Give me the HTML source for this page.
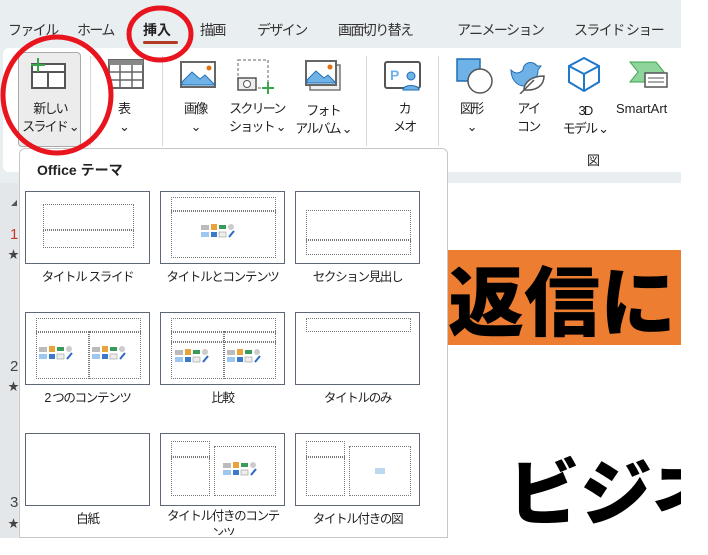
<!DOCTYPE html>
<html><head><meta charset="utf-8"><style>
*{margin:0;padding:0;box-sizing:border-box}
body{width:708px;height:555px;overflow:hidden;background:#fff;font-family:"Liberation Sans","Noto Sans CJK JP",sans-serif;color:#222;position:relative}
.a{position:absolute}
.tab{position:absolute;top:20px;font-size:14px;letter-spacing:-1.6px;color:#333;white-space:nowrap}
.lbl{position:absolute;font-size:13px;letter-spacing:-1.8px;color:#222;text-align:center;line-height:18px;white-space:nowrap}
.sep{position:absolute;top:56px;width:1px;height:90px;background:#d8d8d8}
.th{position:absolute;width:125px;height:73px;border:1.5px solid #5f6678;background:#fff}
.d{position:absolute;border:1px dotted #777}
.tl{position:absolute;width:125px;text-align:center;font-size:12.5px;letter-spacing:-1.3px;color:#222;white-space:nowrap}
.ic{position:absolute;width:44px;height:15px}
</style></head><body>
<div class="a" style="left:0;top:0;width:681px;height:555px;background:#e9eef1"></div>
<div class="a" style="left:681px;top:0;width:27px;height:555px;background:#fff"></div>
<div class="tab" style="left:8px">ファイル</div>
<div class="tab" style="left:77px">ホーム</div>
<div class="tab" style="left:143px;font-weight:bold;color:#222;letter-spacing:0">挿入</div>
<div class="a" style="left:143px;top:41px;width:35px;height:3px;background:#b33a22;border-radius:2px"></div>
<div class="tab" style="left:200px">描画</div>
<div class="tab" style="left:257px">デザイン</div>
<div class="tab" style="left:338px">画面切り替え</div>
<div class="tab" style="left:457px">アニメーション</div>
<div class="tab" style="left:574px">スライド ショー</div>
<!-- ribbon -->
<div class="a" style="left:3px;top:48px;width:678px;height:124px;background:#fff;border-radius:6px 0 0 6px"></div>
<div class="a" style="left:18px;top:52px;width:63px;height:95px;background:#ececec;border:1px solid #aaa;border-radius:4px"></div>
<svg class="a" style="left:28px;top:58px" width="42" height="34"><rect x="4" y="6" width="33" height="24" fill="#fff" stroke="#555" stroke-width="2"/><line x1="4" y1="14" x2="37" y2="14" stroke="#555" stroke-width="2"/><line x1="20" y1="14" x2="20" y2="30" stroke="#555" stroke-width="2"/><path d="M10 0v14M3 7h14" stroke="#3aa64a" stroke-width="2"/></svg>
<div class="lbl" style="left:21px;top:100px;width:58px">新しい<br>スライド ⌄</div>
<div class="sep" style="left:90px"></div>
<svg class="a" style="left:108px;top:58px" width="38" height="34"><rect x="1" y="2" width="34" height="28" fill="#fff" stroke="#666" stroke-width="2"/><rect x="1" y="2" width="34" height="5" fill="#888"/><path d="M1 14h34M1 22h34M12 7v23M24 7v23" stroke="#666" stroke-width="1.5"/></svg>
<div class="lbl" style="left:118px;top:100px">表<br>⌄</div>
<div class="sep" style="left:162px"></div>
<svg class="a" style="left:180px;top:60px" width="38" height="30"><rect x="1" y="2" width="34" height="25" fill="#fff" stroke="#666" stroke-width="2"/><path d="M2 22l10-10 8 7 5-4 10 10H2z" fill="#6fb2e8" stroke="#1f6fb4"/><circle cx="29" cy="8" r="2.5" fill="#e07010"/></svg>
<div class="lbl" style="left:184px;top:100px">画像<br>⌄</div>
<svg class="a" style="left:236px;top:58px" width="44" height="36"><rect x="2" y="2" width="30" height="28" fill="none" stroke="#999" stroke-dasharray="3 2" stroke-width="1.5"/><rect x="2" y="20" width="18" height="12" fill="#eee" stroke="#555" stroke-width="1.5"/><circle cx="11" cy="26" r="3.5" fill="#fff" stroke="#555"/><path d="M32 24v12M26 30h12" stroke="#3aa64a" stroke-width="2"/></svg>
<div class="lbl" style="left:229px;top:100px">スクリーン<br>ショット ⌄</div>
<svg class="a" style="left:305px;top:60px" width="38" height="32"><rect x="5" y="5" width="30" height="25" fill="#eee" stroke="#777" stroke-width="1.5"/><rect x="1" y="1" width="30" height="24" fill="#fff" stroke="#666" stroke-width="2"/><path d="M2 20l9-9 8 7 4-3 8 8H2z" fill="#6fb2e8" stroke="#1f6fb4"/><circle cx="25" cy="7" r="2.5" fill="#e07010"/></svg>
<div class="lbl" style="left:292px;top:102px;width:62px">フォト<br>アルバム ⌄</div>
<div class="sep" style="left:366px"></div>
<svg class="a" style="left:384px;top:60px" width="40" height="32"><rect x="1" y="2" width="35" height="26" rx="2" fill="#fff" stroke="#555" stroke-width="2"/><text x="6" y="20" font-size="14" font-family="Liberation Sans" font-weight="bold" fill="#6fb2e8">P</text><circle cx="27" cy="16" r="4" fill="#6fb2e8" stroke="#1f6fb4"/><path d="M19 30c0-6 16-6 16 0z" fill="#6fb2e8" stroke="#1f6fb4"/></svg>
<div class="lbl" style="left:393px;top:100px">カ<br>メオ</div>
<div class="sep" style="left:438px"></div>
<svg class="a" style="left:456px;top:58px" width="40" height="36"><rect x="1" y="1" width="23" height="22" fill="#6fb2e8" stroke="#1f6fb4" stroke-width="1.5"/><circle cx="24" cy="23" r="12" fill="#fff" stroke="#555" stroke-width="1.5"/></svg>
<div class="lbl" style="left:460px;top:100px">図形<br>⌄</div>
<svg class="a" style="left:510px;top:58px" width="38" height="36"><path d="M1 12c4 4 8 4 12 0 0-8 10-10 14-4l4 0-3 4c0 8-4 14-14 16C6 28 1 20 1 12z" fill="#6fb2e8" stroke="#1f6fb4"/><path d="M14 32c0-8 8-14 20-14 0 10-8 14-16 14z" fill="#fff" stroke="#555" stroke-width="1.5"/><path d="M10 36l14-14" stroke="#555" stroke-width="1.5"/></svg>
<div class="lbl" style="left:517px;top:100px">アイ<br>コン</div>
<svg class="a" style="left:566px;top:56px" width="36" height="38"><path d="M18 2l15 8v16l-15 9-15-9V10z M3 10l15 8 15-8 M18 18v17" fill="none" stroke="#1f78c8" stroke-width="2"/></svg>
<div class="lbl" style="left:560px;top:102px;width:50px">3D<br>モデル ⌄</div>
<svg class="a" style="left:628px;top:60px" width="42" height="32"><path d="M2 2h26l8 10-8 10H2l8-10z" fill="#8fd49b" stroke="#3aa64a"/><rect x="17" y="13" width="22" height="14" fill="#fff" stroke="#555" stroke-width="1.5"/><path d="M20 18h16M20 22h16" stroke="#555"/></svg>
<div class="lbl" style="left:616px;top:100px;letter-spacing:0">SmartArt</div>
<div class="lbl" style="left:587px;top:152px">図</div>
<!-- thumbnails pane -->
<div class="a" style="left:0;top:183px;width:18px;height:372px;background:#e3e7ea"></div>
<div class="a" style="left:11px;top:200px;width:0;height:0;border-left:6px solid transparent;border-bottom:6px solid #555"></div>
<div class="a" style="left:10px;top:226px;font-size:15px;color:#c0392b">1</div>
<div class="a" style="left:8px;top:246px;font-size:11px;color:#444">★</div>
<div class="a" style="left:10px;top:358px;font-size:15px;color:#444">2</div>
<div class="a" style="left:8px;top:378px;font-size:11px;color:#444">★</div>
<div class="a" style="left:10px;top:494px;font-size:15px;color:#444">3</div>
<div class="a" style="left:8px;top:515px;font-size:11px;color:#444">★</div>
<!-- slide area -->
<div class="a" style="left:447px;top:183px;width:234px;height:355px;background:#fff;border-left:1px solid #c8c8c8"></div>
<div class="a" style="left:448px;top:250px;width:233px;height:95px;background:#ed7d31;overflow:hidden"><div style="position:absolute;left:0;top:2px;font-size:76px;font-weight:900;line-height:90px;color:#000;white-space:nowrap;font-family:'Noto Sans CJK JP',sans-serif">返信に</div></div>
<div class="a" style="left:508px;top:440px;width:173px;height:95px;overflow:hidden"><div style="font-size:72px;font-weight:900;line-height:95px;color:#000;white-space:nowrap;font-family:'Noto Sans CJK JP',sans-serif">ビジネ</div></div>
<div class="a" style="left:0;top:538px;width:708px;height:17px;background:#fff"></div>
<!-- dropdown -->
<div class="a" style="left:19px;top:148px;width:429px;height:390px;background:#fff;border:1px solid #c6c6c6;border-radius:6px 6px 0 0"></div>
<div class="a" style="left:37px;top:160px;font-size:14px;font-weight:bold;color:#222">Office テーマ</div>

<div class="th" style="left:25px;top:191px"><div class="d" style="left:17px;top:12px;width:91px;height:44px"></div><div class="d" style="left:17px;top:37px;width:91px;height:0"></div></div>
<div class="tl" style="left:25px;top:266px">タイトル スライド</div>
<div class="th" style="left:160px;top:191px"><div class="d" style="left:10px;top:5px;width:105px;height:61px"></div><div class="d" style="left:10px;top:18px;width:105px;height:0"></div><svg class="ic" style="left:40px;top:32px"><rect x="0" y="1" width="8" height="5" fill="#bbb"/><rect x="10" y="0" width="6" height="6" fill="#e8a33a"/><rect x="18" y="1" width="7" height="4" fill="#3a9a5a"/><circle cx="30" cy="3" r="3" fill="#ccc"/><rect x="0" y="8" width="8" height="5" fill="#9cc7ee"/><rect x="10" y="8" width="6" height="5" fill="#3a7ac8"/><rect x="18" y="8" width="7" height="5" fill="#eee" stroke="#999" stroke-width=".6"/><path d="M28 13l5-6" stroke="#2a6ac8" stroke-width="2"/></svg></div>
<div class="tl" style="left:160px;top:266px">タイトルとコンテンツ</div>
<div class="th" style="left:295px;top:191px"><div class="d" style="left:10px;top:18px;width:105px;height:45px"></div><div class="d" style="left:10px;top:47px;width:105px;height:0"></div></div>
<div class="tl" style="left:295px;top:266px">セクション見出し</div>

<div class="th" style="left:25px;top:312px"><div class="d" style="left:10px;top:5px;width:105px;height:61px"></div><div class="d" style="left:10px;top:18px;width:105px;height:0"></div><div class="d" style="left:62px;top:18px;width:0;height:48px"></div><svg class="ic" style="left:13px;top:33px"><rect x="0" y="1" width="8" height="5" fill="#bbb"/><rect x="10" y="0" width="6" height="6" fill="#e8a33a"/><rect x="18" y="1" width="7" height="4" fill="#3a9a5a"/><circle cx="30" cy="3" r="3" fill="#ccc"/><rect x="0" y="8" width="8" height="5" fill="#9cc7ee"/><rect x="10" y="8" width="6" height="5" fill="#3a7ac8"/><rect x="18" y="8" width="7" height="5" fill="#eee" stroke="#999" stroke-width=".6"/><path d="M28 13l5-6" stroke="#2a6ac8" stroke-width="2"/></svg><svg class="ic" style="left:66px;top:33px"><rect x="0" y="1" width="8" height="5" fill="#bbb"/><rect x="10" y="0" width="6" height="6" fill="#e8a33a"/><rect x="18" y="1" width="7" height="4" fill="#3a9a5a"/><circle cx="30" cy="3" r="3" fill="#ccc"/><rect x="0" y="8" width="8" height="5" fill="#9cc7ee"/><rect x="10" y="8" width="6" height="5" fill="#3a7ac8"/><rect x="18" y="8" width="7" height="5" fill="#eee" stroke="#999" stroke-width=".6"/><path d="M28 13l5-6" stroke="#2a6ac8" stroke-width="2"/></svg></div>
<div class="tl" style="left:25px;top:387px">2 つのコンテンツ</div>
<div class="th" style="left:160px;top:312px"><div class="d" style="left:10px;top:5px;width:105px;height:61px"></div><div class="d" style="left:10px;top:18px;width:105px;height:0"></div><div class="d" style="left:10px;top:28px;width:105px;height:0"></div><div class="d" style="left:62px;top:18px;width:0;height:48px"></div><svg class="ic" style="left:14px;top:36px"><rect x="0" y="1" width="8" height="5" fill="#bbb"/><rect x="10" y="0" width="6" height="6" fill="#e8a33a"/><rect x="18" y="1" width="7" height="4" fill="#3a9a5a"/><circle cx="30" cy="3" r="3" fill="#ccc"/><rect x="0" y="8" width="8" height="5" fill="#9cc7ee"/><rect x="10" y="8" width="6" height="5" fill="#3a7ac8"/><rect x="18" y="8" width="7" height="5" fill="#eee" stroke="#999" stroke-width=".6"/><path d="M28 13l5-6" stroke="#2a6ac8" stroke-width="2"/></svg><svg class="ic" style="left:66px;top:36px"><rect x="0" y="1" width="8" height="5" fill="#bbb"/><rect x="10" y="0" width="6" height="6" fill="#e8a33a"/><rect x="18" y="1" width="7" height="4" fill="#3a9a5a"/><circle cx="30" cy="3" r="3" fill="#ccc"/><rect x="0" y="8" width="8" height="5" fill="#9cc7ee"/><rect x="10" y="8" width="6" height="5" fill="#3a7ac8"/><rect x="18" y="8" width="7" height="5" fill="#eee" stroke="#999" stroke-width=".6"/><path d="M28 13l5-6" stroke="#2a6ac8" stroke-width="2"/></svg></div>
<div class="tl" style="left:160px;top:387px">比較</div>
<div class="th" style="left:295px;top:312px"><div class="d" style="left:10px;top:5px;width:105px;height:14px"></div></div>
<div class="tl" style="left:295px;top:387px">タイトルのみ</div>

<div class="th" style="left:25px;top:433px"></div>
<div class="tl" style="left:25px;top:508px">白紙</div>
<div class="th" style="left:160px;top:433px"><div class="d" style="left:10px;top:7px;width:39px;height:55px"></div><div class="d" style="left:10px;top:22px;width:39px;height:0"></div><div class="d" style="left:53px;top:12px;width:62px;height:50px"></div><svg class="ic" style="left:62px;top:28px"><rect x="0" y="1" width="8" height="5" fill="#bbb"/><rect x="10" y="0" width="6" height="6" fill="#e8a33a"/><rect x="18" y="1" width="7" height="4" fill="#3a9a5a"/><circle cx="30" cy="3" r="3" fill="#ccc"/><rect x="0" y="8" width="8" height="5" fill="#9cc7ee"/><rect x="10" y="8" width="6" height="5" fill="#3a7ac8"/><rect x="18" y="8" width="7" height="5" fill="#eee" stroke="#999" stroke-width=".6"/><path d="M28 13l5-6" stroke="#2a6ac8" stroke-width="2"/></svg></div>
<div class="tl" style="left:163px;top:508px;width:120px;height:27px;overflow:hidden;line-height:17px;white-space:normal;word-break:break-all">タイトル付きのコンテンツ</div>
<div class="th" style="left:295px;top:433px"><div class="d" style="left:10px;top:7px;width:39px;height:55px"></div><div class="d" style="left:10px;top:22px;width:39px;height:0"></div><div class="d" style="left:53px;top:12px;width:62px;height:50px"></div><div class="a" style="left:79px;top:34px;width:10px;height:6px;background:#bcd8f0"></div></div>
<div class="tl" style="left:295px;top:508px">タイトル付きの図</div>

<!-- red circles -->
<svg class="a" style="left:0;top:0" width="708" height="555"><ellipse cx="160" cy="34" rx="31" ry="26" fill="none" stroke="#e8141e" stroke-width="5"/><ellipse cx="57" cy="95" rx="54" ry="58" fill="none" stroke="#e8141e" stroke-width="5"/></svg>
</body></html>
